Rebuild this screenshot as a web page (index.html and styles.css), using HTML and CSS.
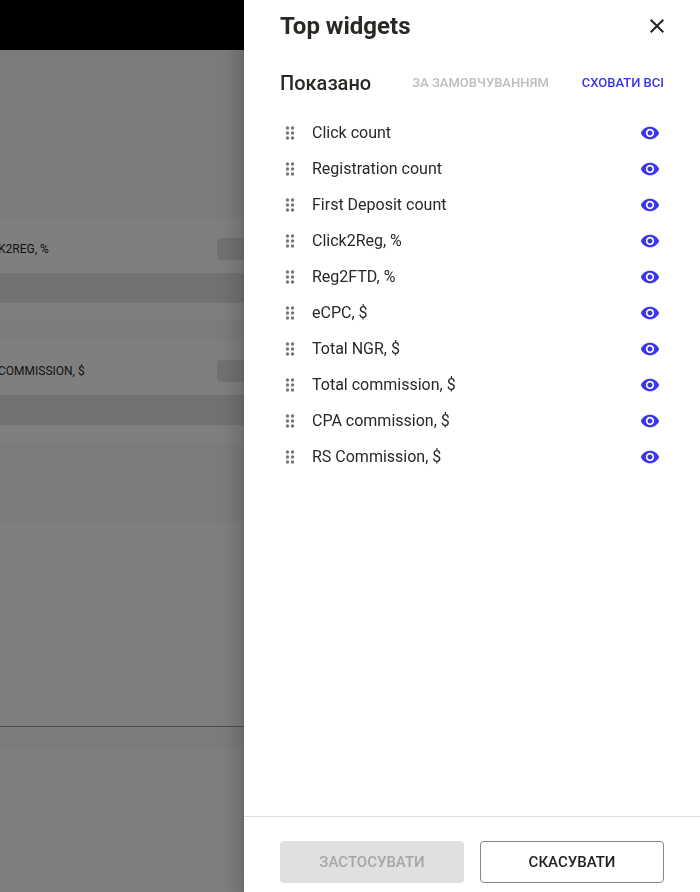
FILE: index.html
```
<!DOCTYPE html>
<html lang="uk">

<head>
    <meta charset="UTF-8">
    <meta name="viewport" content="width=device-width, initial-scale=1">
    <title>Top widgets</title>
    <link rel="stylesheet" href="styles.css">
</head>

<body>
    <svg class="sprite" aria-hidden="true">
        <symbol id="icon-drag" viewBox="0 0 20 20">
            <circle cx="7.500" cy="5" r="1.7"/>
            <circle cx="12.500" cy="5" r="1.7"/>
            <circle cx="7.500" cy="10" r="1.7"/>
            <circle cx="12.500" cy="10" r="1.7"/>
            <circle cx="7.500" cy="15" r="1.7"/>
            <circle cx="12.500" cy="15" r="1.7"/>
        </symbol>
        <symbol id="icon-eye" viewBox="0 0 24 24">
            <path d="M12 4.500C7 4.500 2.730 7.610 1 12c1.730 4.390 6 7.500 11 7.500s9.270-3.110 11-7.500c-1.730-4.390-6-7.500-11-7.500zM12 17c-2.760 0-5-2.240-5-5s2.240-5 5-5 5 2.240 5 5-2.240 5-5 5zm0-8c-1.660 0-3 1.340-3 3s1.340 3 3 3 3-1.340 3-3-1.340-3-3-3z"/>
        </symbol>
    </svg>

    <div class="page">
        <header class="topbar"></header>
        <main class="board">
            <section class="card">
                <div class="card-head">
                    <span>K2REG, %</span>
                    <span class="skeleton-chip"></span>
                </div>
                <div class="skeleton-line"></div>
            </section>
            <section class="card">
                <div class="card-head">
                    <span>COMMISSION, $</span>
                    <span class="skeleton-chip"></span>
                </div>
                <div class="skeleton-line"></div>
            </section>
        </main>
        <div class="chart"></div>
        <div class="rest"></div>
    </div>

    <div class="backdrop">
        <aside class="drawer" role="dialog" aria-labelledby="drawer-title">
            <header class="drawer-header">
                <h1 id="drawer-title">Top widgets</h1>
                <button type="button" class="close" aria-label="Закрити">
                    <svg viewBox="0 0 24 24" width="24" height="24"><path d="M19 6.410 17.590 5 12 10.590 6.410 5 5 6.410 10.590 12 5 17.590 6.410 19 12 13.410 17.590 19 19 17.590 13.410 12z"/></svg>
                </button>
            </header>

            <div class="drawer-body">
                <div class="section-header">
                    <h2>Показано</h2>
                    <div class="section-actions">
                        <button type="button" class="link-btn" disabled>ЗА ЗАМОВЧУВАННЯМ</button>
                        <button type="button" class="link-btn">СХОВАТИ ВСІ</button>
                    </div>
                </div>

                <ul class="widgets">
                    <li><svg class="drag"><use href="#icon-drag"/></svg><span>Click count</span><button type="button" class="eye" aria-label="Сховати Click count"><svg><use href="#icon-eye"/></svg></button></li>
                    <li><svg class="drag"><use href="#icon-drag"/></svg><span>Registration count</span><button type="button" class="eye" aria-label="Сховати Registration count"><svg><use href="#icon-eye"/></svg></button></li>
                    <li><svg class="drag"><use href="#icon-drag"/></svg><span>First Deposit count</span><button type="button" class="eye" aria-label="Сховати First Deposit count"><svg><use href="#icon-eye"/></svg></button></li>
                    <li><svg class="drag"><use href="#icon-drag"/></svg><span>Click2Reg, %</span><button type="button" class="eye" aria-label="Сховати Click2Reg"><svg><use href="#icon-eye"/></svg></button></li>
                    <li><svg class="drag"><use href="#icon-drag"/></svg><span>Reg2FTD, %</span><button type="button" class="eye" aria-label="Сховати Reg2FTD"><svg><use href="#icon-eye"/></svg></button></li>
                    <li><svg class="drag"><use href="#icon-drag"/></svg><span>eCPC, $</span><button type="button" class="eye" aria-label="Сховати eCPC"><svg><use href="#icon-eye"/></svg></button></li>
                    <li><svg class="drag"><use href="#icon-drag"/></svg><span>Total NGR, $</span><button type="button" class="eye" aria-label="Сховати Total NGR"><svg><use href="#icon-eye"/></svg></button></li>
                    <li><svg class="drag"><use href="#icon-drag"/></svg><span>Total commission, $</span><button type="button" class="eye" aria-label="Сховати Total commission"><svg><use href="#icon-eye"/></svg></button></li>
                    <li><svg class="drag"><use href="#icon-drag"/></svg><span>CPA commission, $</span><button type="button" class="eye" aria-label="Сховати CPA commission"><svg><use href="#icon-eye"/></svg></button></li>
                    <li><svg class="drag"><use href="#icon-drag"/></svg><span>RS Commission, $</span><button type="button" class="eye" aria-label="Сховати RS Commission"><svg><use href="#icon-eye"/></svg></button></li>
                </ul>
            </div>

            <footer class="drawer-footer">
                <button type="button" class="btn btn-apply" disabled>ЗАСТОСУВАТИ</button>
                <button type="button" class="btn btn-cancel">СКАСУВАТИ</button>
            </footer>
        </aside>
    </div>
</body>

</html>
```
FILE: styles.css
```
* {
    box-sizing: border-box;
}

body {
    margin: 0;
    font-family: Roboto, "Liberation Sans", sans-serif;
    font-size: 16px;
    color: #2a2824;
    background-color: #fff;
    overflow: hidden;
}

h1,
h2,
ul {
    margin: 0;
    padding: 0;
}

button {
    font-family: inherit;
    background: none;
    border: none;
    padding: 0;
    cursor: pointer;
}

button:disabled {
    cursor: default;
}

.sprite {
    display: none;
}

/* dashboard behind the drawer */
.page {
    display: flex;
    flex-direction: column;
    height: 100vh;
    background-color: #fff;
}

.topbar {
    height: 50px;
    background-color: #000;
}

.board {
    display: flex;
    flex-direction: column;
    gap: 20px;
    padding: 168px 0 80px;
    background-color: #f8f8f8;
}

.card {
    padding: 20px 0 17px;
    background-color: #fff;
}

.card-head {
    display: grid;
    grid-template-columns: 219px 1fr;
    align-items: center;
    margin: 0 0 13px -2px;
    font-size: 12px;
}

.skeleton-chip {
    height: 22px;
    border-radius: 4px;
    background-color: #e4e4e4;
}

.skeleton-line {
    height: 30px;
    background-color: #e4e4e4;
}

.chart {
    height: 205px;
    border-bottom: 1px solid #999;
}

.rest {
    height: 23px;
    background-color: #f8f8f8;
}

/* drawer */
.backdrop {
    position: fixed;
    inset: 0;
    display: flex;
    justify-content: flex-end;
    background-color: rgba(0, 0, 0, 0.5);
}

.drawer {
    display: flex;
    flex-direction: column;
    width: 456px;
    max-width: 100%;
    background-color: #fff;
    box-shadow: 0 8px 10px -5px rgba(0, 0, 0, 0.2), 0 16px 24px 2px rgba(0, 0, 0, 0.14), 0 6px 30px 5px rgba(0, 0, 0, 0.12);
}

.drawer-header {
    display: flex;
    justify-content: space-between;
    align-items: center;
    height: 52px;
    padding: 0 31px 0 36px;
}

.drawer-header h1 {
    font-size: 24px;
    font-weight: 700;
}

.close {
    display: flex;
    color: #222;
}

.close svg,
.eye svg,
.drag {
    fill: currentColor;
}

.drawer-body {
    flex: 1;
    padding: 16px 36px;
    overflow-y: auto;
}

.section-header {
    display: flex;
    justify-content: space-between;
    align-items: center;
    height: 30px;
    margin-bottom: 17px;
}

.section-header h2 {
    font-size: 20px;
    font-weight: 500;
}

.section-actions {
    display: flex;
    gap: 33px;
    padding-bottom: 2px;
}

.link-btn {
    font-size: 13px;
    font-weight: 500;
    color: #3a36eb;
}

.link-btn:disabled {
    color: #bdbdbd;
}

.widgets {
    list-style: none;
}

.widgets li {
    display: flex;
    align-items: center;
    gap: 12px;
    height: 36px;
    padding-right: 4px;
}

.widgets span {
    flex: 1;
    padding-bottom: 2px;
}

.drag {
    width: 20px;
    height: 20px;
    color: #757575;
}

.eye {
    display: flex;
    color: #3a36eb;
}

.eye svg {
    width: 20px;
    height: 20px;
}

.drawer-footer {
    display: flex;
    gap: 16px;
    padding: 24px 36px 9px;
    border-top: 1px solid #e0e0e0;
}

.btn {
    flex: 1;
    height: 42px;
    border: 1px solid transparent;
    border-radius: 4px;
    font-size: 15px;
    font-weight: 500;
}

.btn-apply {
    background-color: #e0e0e0;
    color: #a6a6a6;
}

.btn-cancel {
    border-color: #888;
    color: #222;
}
```
